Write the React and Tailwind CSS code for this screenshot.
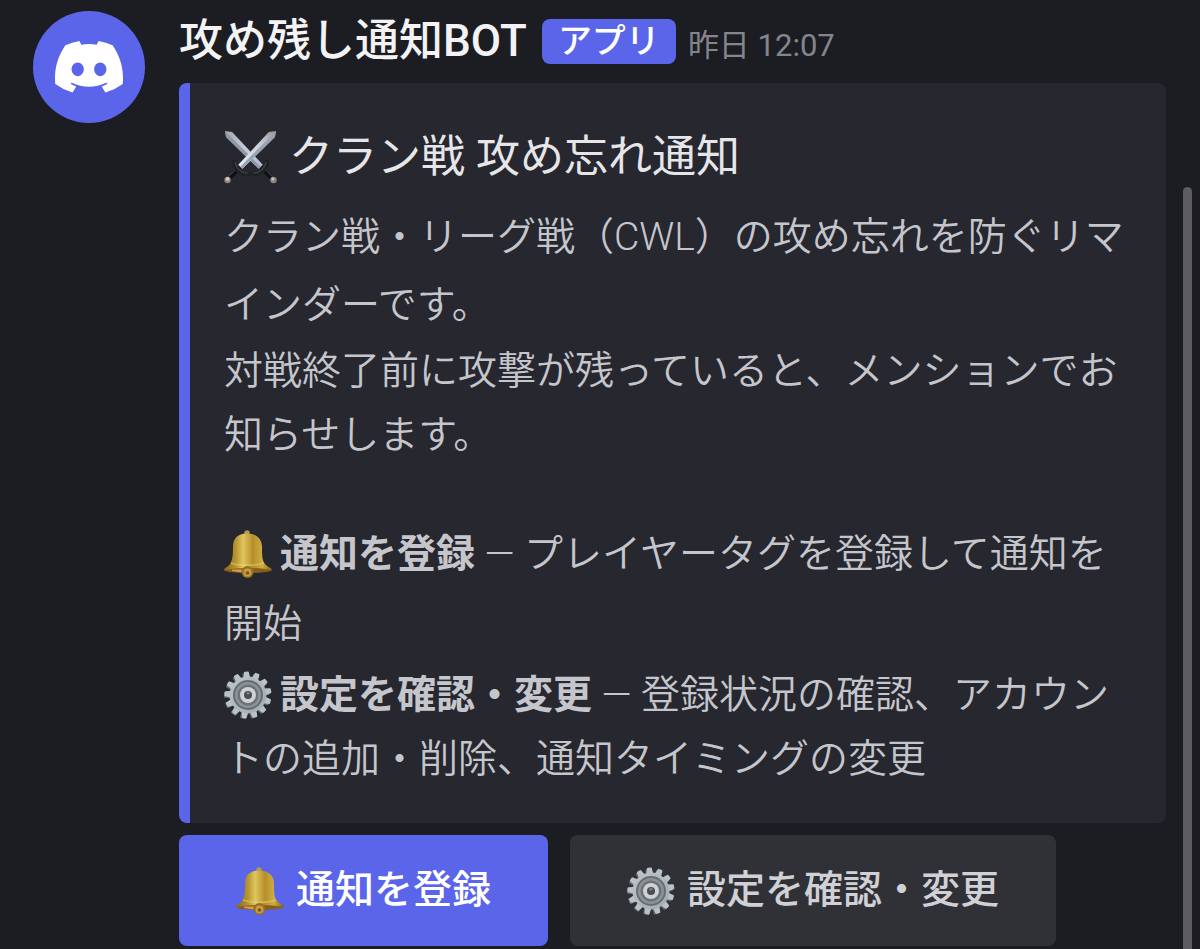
import React from "react";

const GEAR_TEETH = Array.from({ length: 13 }, (_, i) => (i * 360) / 13 - 4);

function DiscordLogo({ className }) {
    return (
        <svg viewBox="0 0 127.14 96.36" fill="currentColor" className={className} aria-hidden="true">
            <path d="M107.7 8.07A105.15 105.15 0 0 0 81.47 0a72.06 72.06 0 0 0-3.36 6.83 97.68 97.68 0 0 0-29.11 0A72.37 72.37 0 0 0 45.64 0a105.89 105.89 0 0 0-26.25 8.09C2.79 32.65-1.71 56.6.54 80.21a105.73 105.73 0 0 0 32.17 16.15 77.7 77.7 0 0 0 6.89-11.11 68.42 68.42 0 0 1-10.85-5.18c.91-.66 1.8-1.34 2.66-2a75.57 75.57 0 0 0 64.32 0c.87.71 1.76 1.39 2.66 2a68.68 68.68 0 0 1-10.87 5.19 77 77 0 0 0 6.89 11.1 105.25 105.25 0 0 0 32.19-16.14c2.64-27.38-4.51-51.11-18.9-72.15ZM42.45 65.69C36.18 65.69 31 60 31 53s5-12.74 11.43-12.74S54 46 53.89 53s-5.05 12.69-11.44 12.69Zm42.24 0C78.41 65.69 73.25 60 73.25 53s5-12.74 11.44-12.74S96.23 46 96.12 53s-5.04 12.69-11.43 12.69Z" />
        </svg>
    );
}

function SwordsIcon({ className }) {
    return (
        <svg viewBox="0 0 52 52" className={className} aria-hidden="true">
            <defs>
                <linearGradient id="blade" x1="0" y1="0" x2="1" y2="1">
                    <stop offset="0" stopColor="#a9a9ac" />
                    <stop offset="0.5" stopColor="#c3ccd8" />
                    <stop offset="1" stopColor="#b4c0cf" />
                </linearGradient>
                <linearGradient id="bladeFront" x1="1" y1="0" x2="0" y2="1">
                    <stop offset="0" stopColor="#9a9490" />
                    <stop offset="0.4" stopColor="#c9d0da" />
                    <stop offset="1" stopColor="#e8eef6" />
                </linearGradient>
            </defs>
            {/* sword pointing up left */}
            <path d="M1 0 8 1 38 33 34 37 2 6Z" fill="url(#blade)" />
            <path d="M1 0 36 35 34 37 2 6Z" fill="#8f9aa8" />
            <path d="m37 36 11 11" stroke="#0e1012" strokeWidth="4.500" />
            <path d="m38 35 10 10" stroke="#3c4347" strokeWidth="1.200" />
            <path d="M28 42c5 1 8-1 10-3s4-5 4-9" fill="none" stroke="#1d2224" strokeWidth="4" strokeLinecap="round" />
            <path d="M29 41c4 1 6-1 8-3s4-4 4-7" fill="none" stroke="#454e4b" strokeWidth="1" strokeLinecap="round" />
            <circle cx="48.500" cy="48" r="3.200" fill="#8d8482" />
            <circle cx="48" cy="47" r="1.500" fill="#c9bdba" />
            {/* sword pointing up right */}
            <path d="M51 0 44 1 14 33 18 37 50 6Z" fill="url(#bladeFront)" />
            <path d="M51 0 16 35 18 37 50 6Z" fill="#97a3b2" />
            <path d="M15 36 4 47" stroke="#0e1012" strokeWidth="4.500" />
            <path d="M14 35 4 45" stroke="#3c4347" strokeWidth="1.200" />
            <path d="M24 42c-5 1-8-1-10-3s-4-5-4-9" fill="none" stroke="#1d2224" strokeWidth="4" strokeLinecap="round" />
            <path d="M23 41c-4 1-6-1-8-3s-4-4-4-7" fill="none" stroke="#454e4b" strokeWidth="1" strokeLinecap="round" />
            <circle cx="3.500" cy="48" r="3.200" fill="#8d8482" />
            <circle cx="3.500" cy="47" r="1.800" fill="#d6cbc8" />
        </svg>
    );
}

function BellIcon({ className }) {
    return (
        <svg viewBox="0 0 48 48" className={className} aria-hidden="true">
            <defs>
                <linearGradient id="brass" x1="0" y1="0" x2="1" y2="0">
                    <stop offset="0" stopColor="#8a6a18" />
                    <stop offset="0.25" stopColor="#b8952f" />
                    <stop offset="0.4" stopColor="#e0c65e" />
                    <stop offset="0.6" stopColor="#b58f2a" />
                    <stop offset="0.8" stopColor="#cfae42" />
                    <stop offset="1" stopColor="#7c5b14" />
                </linearGradient>
            </defs>
            <circle cx="23" cy="3" r="2.800" fill="#b0965a" />
            <path d="M23 3.500C13 3.500 9 9 9 17c0 8-.5 13-3 17-2 3-6 4-6 6 0 3 48 3 48 0 0-2-4-3-7-6-3-4-3-9-3-17 0-8-5-13.500-15-13.500Z" fill="url(#brass)" />
            <path d="M7 33c8 3 25 3 33 0" fill="none" stroke="#f0d878" strokeWidth="1.500" opacity="0.500" />
            <ellipse cx="24" cy="40.500" rx="22" ry="2.500" fill="#86601a" />
            <path d="M8 39.500h11l-2 3-9-1.500Z" fill="#d79a55" />
            <circle cx="23.500" cy="42" r="6" fill="#94701f" />
            <circle cx="23.500" cy="42.500" r="4" fill="#c99a48" />
            <circle cx="23.500" cy="43" r="1.800" fill="#7b5218" />
        </svg>
    );
}

function GearIcon({ className }) {
    return (
        <svg viewBox="0 0 48 48" className={className} aria-hidden="true">
            <defs>
                <linearGradient id="steel" x1="0" y1="0" x2="1" y2="1">
                    <stop offset="0" stopColor="#bcc4c8" />
                    <stop offset="1" stopColor="#a3abb0" />
                </linearGradient>
            </defs>
            {/* the rim's shaded side shows behind the face */}
            {GEAR_TEETH.map((angle) => (
                <path key={`shade-${angle}`} transform={`translate(-1 1) rotate(${angle} 24 24)`} d="M21 8v-6q0-1 1-1h4q1 0 1 1v6Z" fill="#666a6c" />
            ))}
            {GEAR_TEETH.map((angle) => (
                <path key={`tooth-${angle}`} transform={`rotate(${angle} 24 24)`} d="M20.500 8l1-6.500q0-1 1-1h3q1 0 1 1l1 6.500Z" fill="#b9c2c7" />
            ))}
            <circle cx="24" cy="24" r="18.500" fill="url(#steel)" />
            <circle cx="24" cy="24" r="15" fill="#676e72" />
            <circle cx="24" cy="24" r="13" fill="#8b9398" />
            <circle cx="24" cy="24" r="10.500" fill="#6c7378" />
            <circle cx="24" cy="24" r="8" fill="#ccd2d5" />
            <circle cx="24" cy="24" r="4" fill="#4b4d50" />
            <path d="M22 22a3 3 0 0 1 4 0l-2 2Z" fill="#8b8277" />
        </svg>
    );
}

export default function App() {
    return (
        <div lang="ja" className="flex min-h-screen bg-[#1c1d22] font-[Roboto,'Noto_Sans_CJK_JP',sans-serif]">
            <article className="flex flex-1 gap-[34px] pl-[33px]">
                <div className="mt-[11px] flex size-28 shrink-0 items-center justify-center rounded-full bg-[#5a65ea] text-white">
                    <DiscordLogo className="w-[68px]" />
                </div>

                <div className="min-w-0 flex-1">
                    <header className="flex items-baseline">
                        <h1 className="text-[44px] leading-[83px] font-medium text-[#f3f3f5]">攻め残し通知BOT</h1>
                        <span className="ml-[15px] self-center rounded-lg bg-[#5a65ea] px-4 text-[34px] leading-[45px] font-medium text-white">アプリ</span>
                        <time className="ml-3 text-[31px] leading-[45px] text-[#84858d]">昨日 12:07</time>
                    </header>

                    <section className="rounded-lg border-l-[11px] border-[#5a65ea] bg-[#26272f] px-[34px] pt-10 pb-8 text-[39px] font-[350] text-[#c5c6cc]">
                        <h2 className="mb-3 flex items-center gap-3 text-[44px] leading-[68px] font-normal text-[#e6e6e9]">
                            <SwordsIcon className="size-[53px]" />
                            クラン戦 攻め忘れ通知
                        </h2>
                        <p className="leading-[68px]">クラン戦・リーグ戦（CWL）の攻め忘れを防ぐリマインダーです。</p>
                        <p className="leading-[64px]">対戦終了前に攻撃が残っていると、メンションでお知らせします。</p>
                        <p className="mt-[52px] leading-[70px]">
                            <BellIcon className="mr-2 inline size-12 align-[-11px]" />
                            <strong className="font-bold">通知を登録</strong> — プレイヤータグを登録して通知を開始
                        </p>
                        <p className="mt-1 leading-[64px]">
                            <GearIcon className="mr-2 inline size-12 align-[-11px]" />
                            <strong className="font-bold">設定を確認・変更</strong> — 登録状況の確認、アカウントの追加・削除、通知タイミングの変更
                        </p>
                    </section>

                    <div className="mt-3 flex gap-[22px] text-[39px] leading-[111px] font-medium">
                        <button type="button" className="flex items-center gap-3 rounded-lg bg-[#5a65ea] px-[57px] text-white">
                            <BellIcon className="size-12" />
                            通知を登録
                        </button>
                        <button type="button" className="flex items-center gap-3 rounded-lg bg-[#303137] px-[57px] text-[#d0d1d6]">
                            <GearIcon className="size-12" />
                            設定を確認・変更
                        </button>
                    </div>
                </div>
            </article>

            <div className="mt-[187px] mr-2 ml-[17px] w-[9px] rounded-t-full bg-[#5d5d61]"></div>
        </div>
    );
}
